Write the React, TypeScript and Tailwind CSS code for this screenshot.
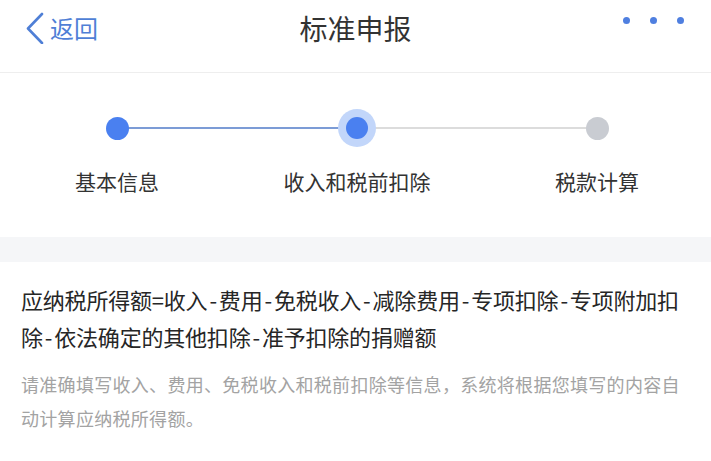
import { Fragment } from "react";

const steps = [
  { label: "基本信息", state: "done" },
  { label: "收入和税前扣除", state: "active" },
  { label: "税款计算", state: "todo" },
] as const;

const formula =
  "应纳税所得额=收入-费用-免税收入-减除费用-专项扣除-专项附加扣除-依法确定的其他扣除-准予扣除的捐赠额";

const StepDot = ({ state }: { state: "done" | "active" | "todo" }) => {
  if (state === "active") {
    return (
      <div className="relative z-10 w-[38px] h-[38px] rounded-full bg-[#c2d6fa] flex items-center justify-center">
        <div className="w-[22px] h-[22px] rounded-full bg-[#4a80f0]" />
      </div>
    );
  }
  return (
    <div
      className={`relative z-10 w-[23px] h-[23px] rounded-full ${
        state === "done" ? "bg-[#4a80f0]" : "bg-[#c9ccd2]"
      }`}
    />
  );
};

export default function App() {
  const parts = formula.split("-");

  return (
    <div
      className="w-[711px] h-[461px] overflow-hidden bg-white text-[#333]"
      style={{ fontFamily: '"Noto Sans CJK SC", "Noto Sans", sans-serif' }}
    >
      {/* 顶部导航 */}
      <header className="h-[73px] border-b border-[#eeeeee]">
        <div className="h-[56px] grid grid-cols-[1fr_auto_1fr] items-center">
          <button className="flex items-center text-[#4f7fd6] pl-[25px]">
            <svg width="20" height="32" viewBox="0 0 20 32" fill="none" className="mr-[5px]">
              <polyline
                points="17,2 3,16.5 17,31"
                stroke="currentColor"
                strokeWidth="2.6"
                strokeLinecap="round"
                strokeLinejoin="round"
              />
            </svg>
            <span className="text-[24px] leading-none">返回</span>
          </button>
          <h1 className="text-[28px] leading-none text-[#333]">标准申报</h1>
          <div className="flex justify-end gap-[20px] pr-[27px] -mt-[16px]">
            <span className="w-[7px] h-[7px] rounded-full bg-[#4f7fe0]" />
            <span className="w-[7px] h-[7px] rounded-full bg-[#4f7fe0]" />
            <span className="w-[7px] h-[7px] rounded-full bg-[#4f7fe0]" />
          </div>
        </div>
      </header>

      {/* 步骤条 */}
      <section className="w-[720px] -ml-[3px] grid grid-cols-3 pt-[36px] h-[164px]">
        {steps.map((s, i) => (
          <div key={s.label} className="flex flex-col items-center">
            <div className="relative w-full h-[38px] flex items-center justify-center">
              {i > 0 && (
                <div
                  className={`absolute left-0 w-1/2 top-[18px] h-[2px] ${
                    i === 1 ? "bg-[#7c9cd6]" : "bg-[#dcdcdc]"
                  }`}
                />
              )}
              {i < steps.length - 1 && (
                <div
                  className={`absolute right-0 w-1/2 top-[18px] h-[2px] ${
                    i === 0 ? "bg-[#7c9cd6]" : "bg-[#dcdcdc]"
                  }`}
                />
              )}
              <StepDot state={s.state} />
            </div>
            <div className="mt-[19px] text-[21px] leading-[30px] text-[#333]">{s.label}</div>
          </div>
        ))}
      </section>

      <div className="h-[25px] bg-[#f5f6f8]" />

      {/* 说明 */}
      <section className="pl-[21px] pr-[16px] pt-[19px]">
        <p className="text-[22px] leading-[37px] text-[#262626] tracking-[-0.2px]">
          {parts.map((p, i) => (
            <Fragment key={i}>
              {i > 0 && <span className="mx-[2px]">-</span>}
              {p}
            </Fragment>
          ))}
        </p>
        <p className="mt-[12px] text-[18px] leading-[34px] text-[#a3a3a3] tracking-[0.3px]">
          请准确填写收入、费用、免税收入和税前扣除等信息，系统将根据您填写的内容自动计算应纳税所得额。
        </p>
      </section>
    </div>
  );
}
